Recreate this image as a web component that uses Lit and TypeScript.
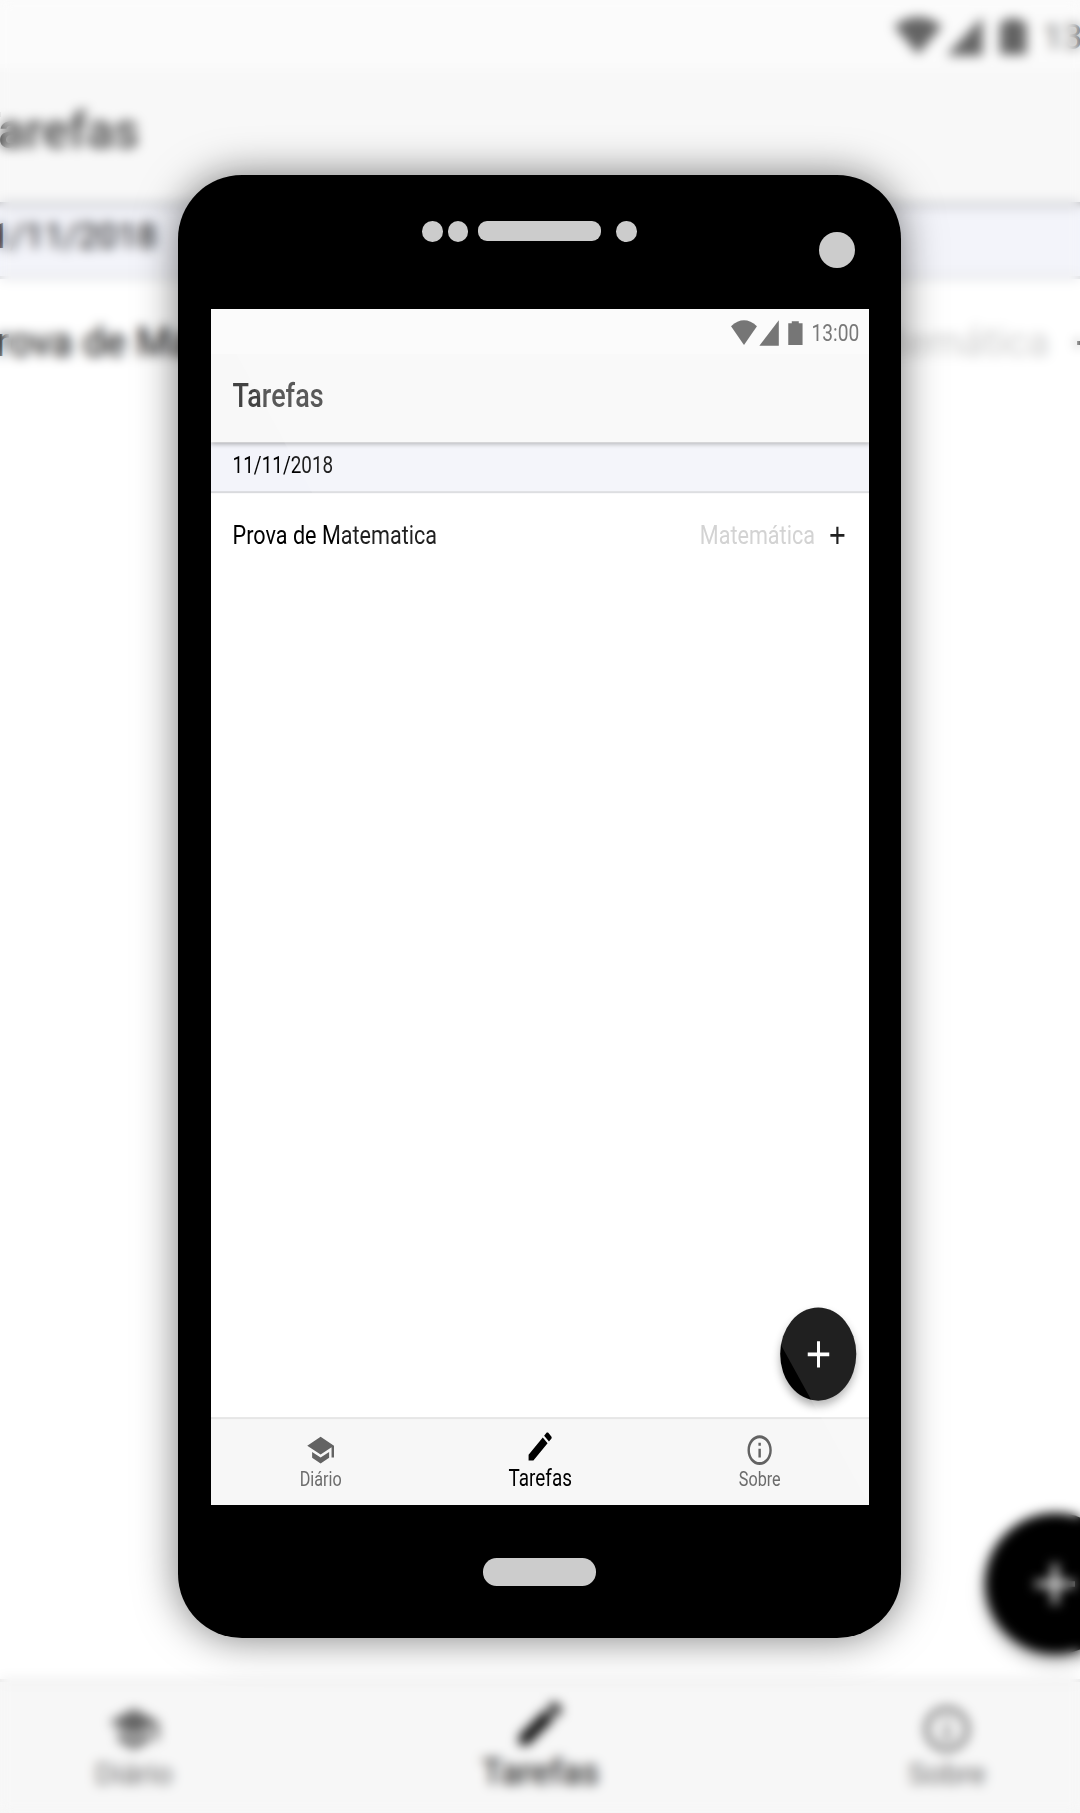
import { LitElement, html, css, svg } from "lit";
import { customElement } from "lit/decorators.js";

const ICONS = {
  school: svg`<path d="M5 13.18v4L12 21l7-3.82v-4L12 17l-7-3.82zM12 3L1 9l11 6 9-4.91V17h2V9L12 3z"/>`,
  edit: svg`<path d="M3 17.25V21h3.75L17.81 9.94l-3.75-3.75L3 17.25zM20.71 7.04c.39-.39.39-1.02 0-1.41l-2.34-2.34c-.39-.39-1.02-.39-1.41 0l-1.83 1.83 3.75 3.75 1.83-1.83z"/>`,
  info: svg`<path d="M11 17h2v-6h-2v6zm1-15C6.48 2 2 6.48 2 12s4.48 10 10 10 10-4.48 10-10S17.52 2 12 2zm0 18c-4.41 0-8-3.59-8-8s3.59-8 8-8 8 3.59 8 8-3.59 8-8 8zM11 9h2V7h-2v2z"/>`,
};

const TABS = [
  { icon: ICONS.school, label: "Diário", active: false },
  { icon: ICONS.edit, label: "Tarefas", active: true },
  { icon: ICONS.info, label: "Sobre", active: false },
];

/** The task list screen, laid out at 1219.5 x 1813. */
@customElement("task-screen")
class TaskScreen extends LitElement {
  static styles = css`
    :host {
      display: flex;
      flex-direction: column;
      position: relative;
      isolation: isolate;
      width: 1219.5px;
      height: 1813px;
      background: #fff;
      font-family: Roboto, "Liberation Sans", sans-serif;
      color: #000;
    }
    .status {
      box-sizing: border-box;
      height: 68px;
      padding: 3px 19px 0 0;
      display: flex;
      align-items: center;
      justify-content: flex-end;
      background: #fbfbfb;
      color: #666;
      font-size: 35.5px;
      line-height: 72px;
    }
    .status span {
      padding-top: 2px;
    }
    .status svg {
      display: block;
      width: 134px;
      height: 40px;
      margin-right: 15px;
      fill: #636363;
    }
    .header {
      box-sizing: border-box;
      height: 133.5px;
      padding: 30px 40px 0;
      background: #f8f8f8;
      box-shadow: 0 2px 8px rgba(0, 0, 0, 0.32);
      clip-path: inset(0 0 -20px 0);
      z-index: 1;
      font-size: 50px;
      line-height: 66px;
      font-weight: 500;
      color: #424242;
    }
    .date {
      box-sizing: border-box;
      height: 77px;
      padding: 14px 40px 0;
      background: #f3f4fa;
      border-bottom: 3px solid #d9dadd;
      font-size: 35px;
      line-height: 42px;
    }
    .task {
      display: flex;
      align-items: center;
      padding: 38.5px 45px 0 40px;
      font-size: 40px;
      line-height: 52px;
    }
    .name {
      flex: 1;
    }
    .subject {
      color: #cdcdcd;
      margin-right: 26px;
    }
    .plus {
      width: 30px;
      height: 30px;
      stroke: currentColor;
      stroke-width: 4;
    }
    .fab {
      position: absolute;
      right: 24.5px;
      bottom: 159px;
      width: 141px;
      height: 141px;
      border-radius: 50%;
      display: grid;
      place-items: center;
      background: #000;
      color: #fff;
      box-shadow: 0 8px 14px rgba(0, 0, 0, 0.32);
    }
    .fab .plus {
      width: 46px;
      height: 46px;
      stroke-width: 3.6;
    }
    .tabs {
      box-sizing: border-box;
      margin-top: auto;
      height: 134px;
      display: grid;
      grid-template-columns: repeat(3, 1fr);
      background: #f7f7f7;
      border-top: 3px solid #e6e6e6;
    }
    .tab {
      display: flex;
      flex-direction: column;
      align-items: center;
      padding-top: 20px;
      color: #6c6c6c;
      font-size: 30px;
      line-height: 36px;
    }
    .tab svg {
      width: 54px;
      height: 54px;
      fill: #636363;
    }
    .tab span {
      margin-top: -0.5px;
    }
    .tab.active {
      padding-top: 13px;
      color: #000;
      font-size: 35px;
      line-height: 42px;
    }
    .tab.active svg {
      width: 57px;
      height: 57px;
      fill: #000;
    }
  `;

  render() {
    return html`
      <div class="status">
        <svg viewBox="0 0 134 40">
          <path d="M0 10Q24-8 48 10L24 38.500z" />
          <path d="M52.500 39.500H88.500V1z" />
          <path d="M106 5.500H112.500V2.500H125.500V5.500H132.500V38.500H106z" />
        </svg>
        <span>13:00</span>
      </div>
      <div class="header">Tarefas</div>
      <div class="date">11/11/2018</div>
      <div class="task">
        <span class="name">Prova de Matematica</span>
        <span class="subject">Matemática</span>
        ${this.plus()}
      </div>
      <div class="tabs">
        ${TABS.map(
          (t) => html`<div class="tab ${t.active ? "active" : ""}">
            <svg viewBox="0 0 24 24">${t.icon}</svg>
            <span>${t.label}</span>
          </div>`
        )}
      </div>
      <div class="fab">${this.plus()}</div>
    `;
  }

  private plus() {
    return html`<svg class="plus" viewBox="0 0 30 30">
      <path d="M2 15H28M15 2V28" />
    </svg>`;
  }
}

@customElement("app-root")
class AppRoot extends LitElement {
  static styles = css`
    :host {
      display: block;
      position: relative;
      width: 1080px;
      height: 1813px;
      overflow: hidden;
      background: #fff;
    }
    .backdrop {
      margin-left: -69.25px;
    }
    .haze {
      position: absolute;
      inset: 0;
      backdrop-filter: blur(6px);
    }
    .phone {
      position: absolute;
      left: 178.4px;
      top: 174.7px;
      width: 722.5px;
      height: 1463.3px;
      border-radius: 64px;
      background: #000;
      box-shadow: 0 0 42px rgba(0, 0, 0, 0.52);
      display: flex;
      flex-direction: column;
    }
    .bezel {
      box-sizing: border-box;
      height: 134.3px;
      padding: 46.3px 46px 0 243.8px;
      display: flex;
      align-items: flex-start;
    }
    .dot,
    .speaker,
    .camera,
    .home {
      background: #ccc;
    }
    .dot {
      width: 20.7px;
      height: 20.7px;
      border-radius: 50%;
      margin-right: 4.7px;
    }
    .speaker {
      width: 122.7px;
      height: 20.5px;
      border-radius: 9px;
      margin: 0 15.5px 0 5px;
    }
    .camera {
      width: 36px;
      height: 36px;
      border-radius: 50%;
      margin: 11px 0 0 auto;
    }
    .display {
      position: relative;
      width: 658.3px;
      height: 1196.4px;
      margin-left: 32.6px;
      overflow: hidden;
      flex: none;
    }
    .display task-screen {
      transform: scale(0.54, 0.66);
      transform-origin: 0 0;
    }
    .glare {
      position: absolute;
      inset: 0;
      background: rgba(255, 255, 255, 0.125);
      clip-path: polygon(0 0, 100% 0, 100% 100%);
    }
    .home {
      width: 113.5px;
      height: 27.5px;
      border-radius: 13.7px;
      margin: 53.1px 0 0 304.4px;
    }
  `;

  render() {
    return html`
      <task-screen class="backdrop"></task-screen>
      <div class="haze"></div>
      <div class="phone">
        <div class="bezel">
          <div class="dot"></div>
          <div class="dot"></div>
          <div class="speaker"></div>
          <div class="dot"></div>
          <div class="camera"></div>
        </div>
        <div class="display">
          <task-screen></task-screen>
          <div class="glare"></div>
        </div>
        <div class="home"></div>
      </div>
    `;
  }
}
